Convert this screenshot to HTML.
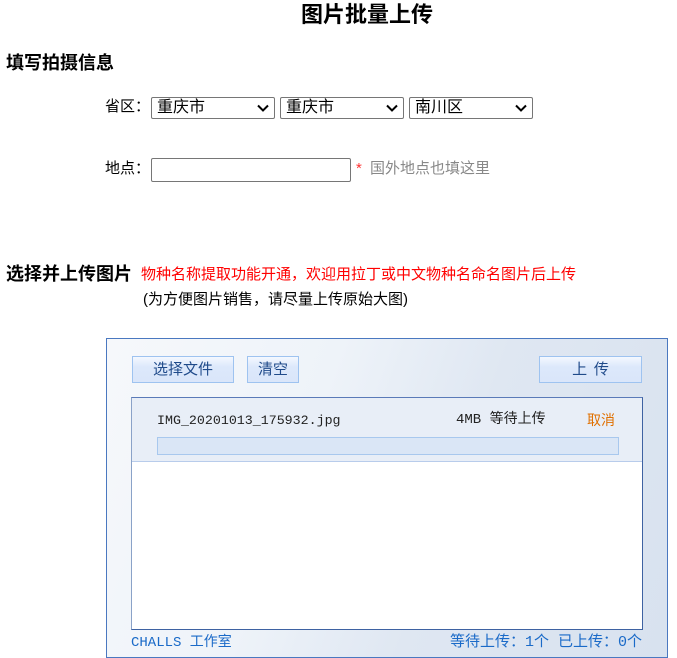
<!DOCTYPE html>
<html><head><meta charset="utf-8">
<style>
*{margin:0;padding:0;box-sizing:border-box}
body{width:677px;height:648px;overflow:hidden;background:#fff;font-family:"Liberation Sans","Noto Sans CJK SC",sans-serif;color:#000;position:relative}
.a{position:absolute;white-space:nowrap}
.sel{position:absolute;height:22px;border:1px solid #767676;border-radius:2px;background:#fff;font-size:16px;line-height:20px;padding-left:5px}
.sel svg{position:absolute;right:5px;top:6px}
.btn{position:absolute;border:1px solid #9ec3f0;background:linear-gradient(#f4f8ff,#dce8fb 40%,#dae6fa);color:#1f4a8a;font-size:15px;text-align:center;line-height:24px;font-family:"Noto Sans CJK SC",sans-serif}
.mono{font-family:"Liberation Mono","Noto Sans CJK SC",monospace}
</style></head><body>
<div class="a" style="left:301px;top:0;font-size:22px;font-weight:bold;line-height:30px">图片批量上传</div>
<div class="a" style="left:6px;top:51px;font-size:18px;font-weight:bold;line-height:24px">填写拍摄信息</div>
<div class="a" style="left:105px;top:97px;font-size:15px;line-height:20px">省区：</div>
<div class="sel" style="left:151px;top:97px;width:124px">重庆市<svg width="12" height="8" viewBox="0 0 12 8"><path d="M1 1.5L6 6.5L11 1.5" fill="none" stroke="#000" stroke-width="2"/></svg></div>
<div class="sel" style="left:280px;top:97px;width:124px">重庆市<svg width="12" height="8" viewBox="0 0 12 8"><path d="M1 1.5L6 6.5L11 1.5" fill="none" stroke="#000" stroke-width="2"/></svg></div>
<div class="sel" style="left:409px;top:97px;width:124px">南川区<svg width="12" height="8" viewBox="0 0 12 8"><path d="M1 1.5L6 6.5L11 1.5" fill="none" stroke="#000" stroke-width="2"/></svg></div>
<div class="a" style="left:105px;top:159px;font-size:15px;line-height:20px">地点：</div>
<div class="a" style="left:151px;top:158px;width:200px;height:24px;border:1px solid #767676;border-radius:2px"></div>
<div class="a" style="left:356px;top:159px;font-size:15px;line-height:20px;color:#f33">*</div>
<div class="a" style="left:370px;top:159px;font-size:15px;line-height:20px;color:#888">国外地点也填这里</div>
<div class="a" style="left:6px;top:262px;font-size:18px;font-weight:bold;line-height:24px">选择并上传图片</div>
<div class="a" style="left:141px;top:265px;font-size:15px;line-height:20px;color:#f00">物种名称提取功能开通，欢迎用拉丁或中文物种名命名图片后上传</div>
<div class="a" style="left:143px;top:290px;font-size:15px;line-height:20px">(为方便图片销售，请尽量上传原始大图)</div>

<div class="a" style="left:106px;top:338px;width:562px;height:320px;border:1px solid #4a78c0;background:linear-gradient(110deg,#f6f8fb 0%,#eef3f9 35%,#dfe7f2 60%,#d8e2ef 100%)"></div>
<div class="btn" style="left:132px;top:356px;width:102px;height:27px">选择文件</div>
<div class="btn" style="left:247px;top:356px;width:52px;height:27px">清空</div>
<div class="btn" style="left:539px;top:356px;width:103px;height:27px">上&nbsp;&nbsp;传</div>
<div class="a" style="left:131px;top:397px;width:512px;height:233px;border:1px solid #3e62a2;border-top-color:#5a7ab8;border-left-color:#8aa2c8;background:#fff"></div>
<div class="a" style="left:132px;top:398px;width:510px;height:64px;background:#e8eef7;border-bottom:1px solid #b8cceb"></div>
<div class="a mono" style="left:157px;top:411px;font-size:13.3px;line-height:20px;color:#222">IMG_20201013_175932.jpg</div>
<div class="a mono" style="left:456px;top:410px;font-size:14px;line-height:20px;color:#222">4MB 等待上传</div>
<div class="a" style="left:587px;top:410px;font-size:14px;line-height:20px;color:#e07000;font-family:'Noto Sans CJK SC',sans-serif">取消</div>
<div class="a" style="left:157px;top:437px;width:462px;height:18px;background:#dae6f6;border:1px solid #a8c8ee"></div>
<div class="a mono" style="left:131px;top:634px;font-size:14px;line-height:18px;color:#1a6ac8">CHALLS 工作室</div>
<div class="a mono" style="right:35px;top:634px;font-size:15px;line-height:18px;color:#1a6ac8">等待上传：1个 已上传：0个</div>
</body></html>
